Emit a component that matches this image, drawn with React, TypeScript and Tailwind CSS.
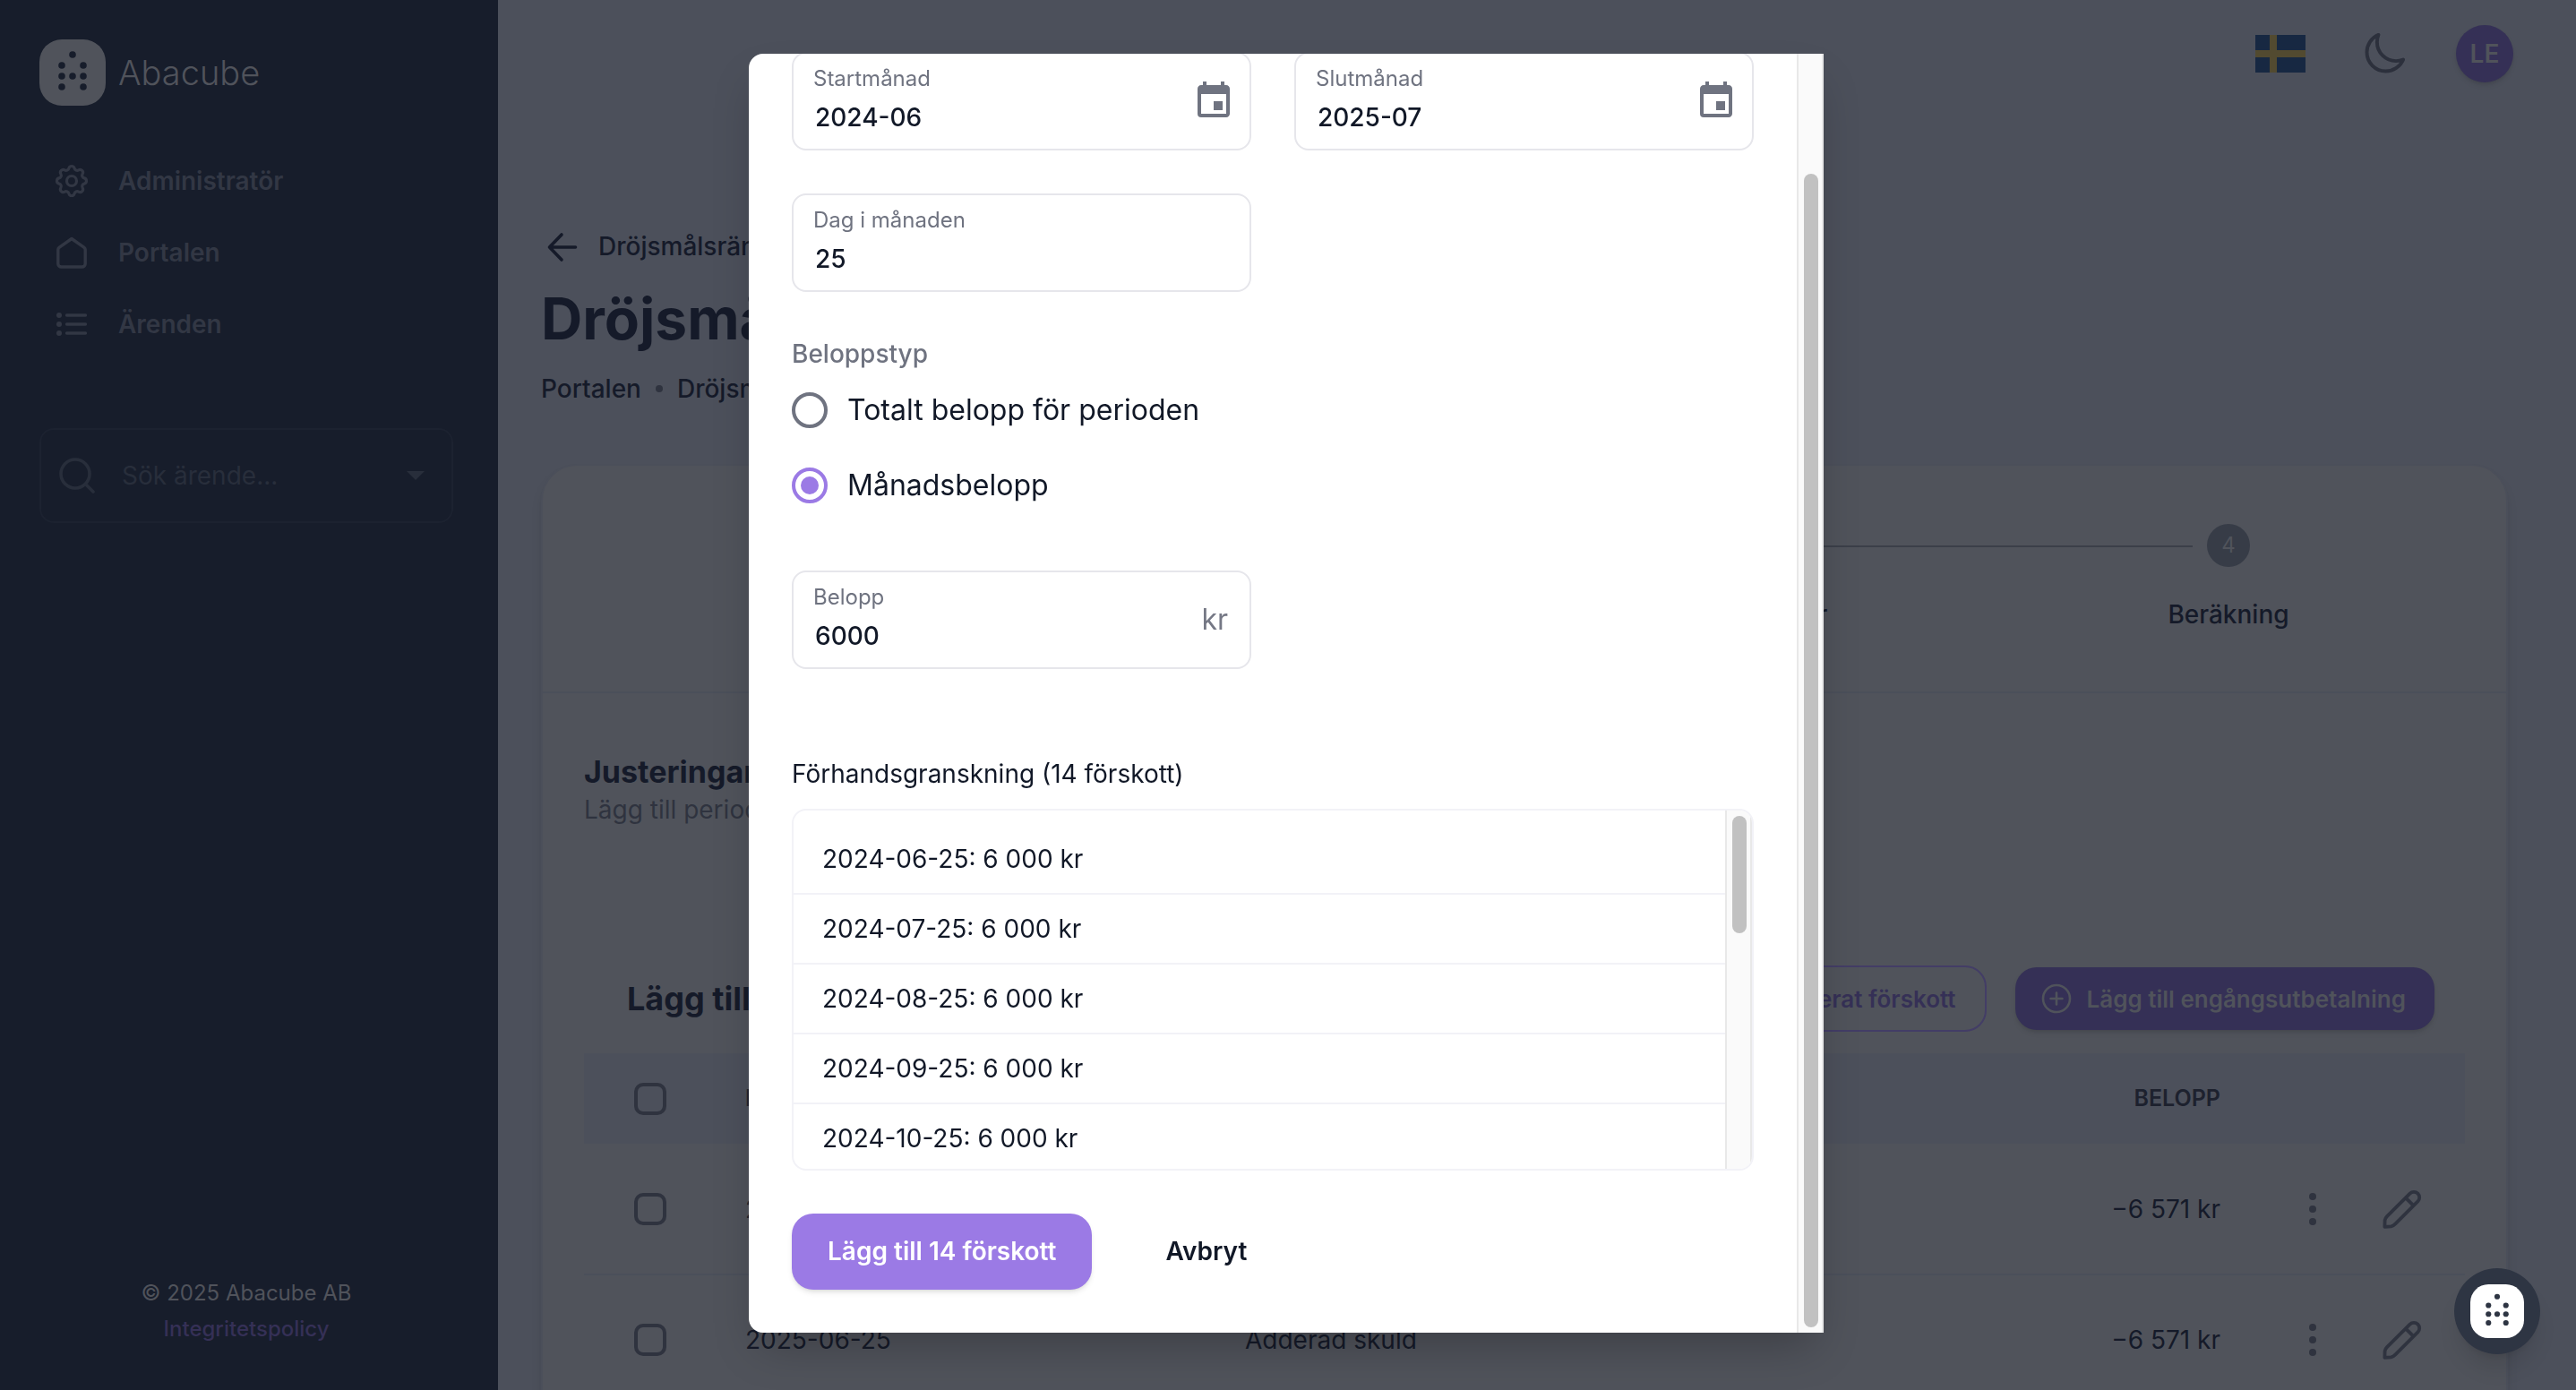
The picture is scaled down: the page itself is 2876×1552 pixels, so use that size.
import { useState } from 'react';
import { HiOutlineMoon } from 'react-icons/hi2';
import { MdEvent } from 'react-icons/md';
import { TbSettings } from 'react-icons/tb';

const steps = ['Uppgifter', 'Perioder', 'Justeringar', 'Beräkning'];

const rows = [
  { date: '2025-07-25', reason: 'Adderad skuld', amount: '−6 571 kr' },
  { date: '2025-06-25', reason: 'Adderad skuld', amount: '−6 571 kr' },
];

const preview = ['2024-06-25', '2024-07-25', '2024-08-25', '2024-09-25', '2024-10-25'];

const logoDots = [
  [37, 17], [25, 29], [49, 29], [25, 41], [37, 41], [49, 41], [25, 53], [49, 53],
];

function LogoMark({ className }: { className: string }) {
  return (
    <svg viewBox="0 0 74 74" className={className} aria-hidden="true">
      <rect width="74" height="74" rx="25" fill="currentColor" />
      {logoDots.map(([x, y]) => (
        <circle key={`${x}-${y}`} cx={x} cy={y} r="3.8" className="fill-[var(--dot)]" />
      ))}
    </svg>
  );
}

function HomeIcon() {
  return (
    <svg viewBox="0 0 36 36" className="size-9" fill="none" stroke="currentColor" strokeWidth="3.4" strokeLinejoin="round" aria-hidden="true">
      <path d="M18 2.5 32 12.3a3 3 0 0 1 1.2 2.4V30.5a3.5 3.5 0 0 1-3.5 3.5H6.3a3.5 3.5 0 0 1-3.5-3.5V14.7a3 3 0 0 1 1.2-2.4L18 2.5z" />
    </svg>
  );
}

function ListIcon() {
  return (
    <svg viewBox="0 0 36 36" className="size-9" stroke="currentColor" strokeLinecap="round" aria-hidden="true">
      {[8, 18, 28].map((y) => (
        <g key={y}>
          <circle cx="4" cy={y} r="3" fill="currentColor" stroke="none" />
          <path d={`M12.5 ${y}H33.5`} strokeWidth="3.4" />
        </g>
      ))}
    </svg>
  );
}

function SearchIcon() {
  return (
    <svg viewBox="0 0 40 40" className="size-10" fill="none" stroke="currentColor" strokeWidth="3.6" strokeLinecap="round" aria-hidden="true">
      <circle cx="18" cy="18" r="16" />
      <path d="m31 31 7 7" />
    </svg>
  );
}

function PencilIcon() {
  return (
    <svg viewBox="0 0 48 48" className="size-12" fill="none" stroke="currentColor" strokeWidth="3.8" strokeLinejoin="round" aria-hidden="true">
      <path d="M32.6 6.6A6.2 6.2 0 0 1 41.4 15.4L16.4 40.4Q14 42.9 11.5 43.4L4.4 43.8 4.6 36.5Q4.8 34.4 7 32.2z" />
      <path d="m27.8 11.4 8.8 8.8" />
    </svg>
  );
}

function NavLink({ icon, label }: { icon: React.ReactNode; label: string }) {
  return (
    <a href="#" className="flex h-20 items-center pl-4 text-[28px] font-semibold">
      <span className="flex w-10 justify-center">{icon}</span>
      <span className="ml-8">{label}</span>
    </a>
  );
}

function Field({ id, label, value, onChange, end }: {
  id: string; label: string; value: string; onChange: (v: string) => void; end?: React.ReactNode;
}) {
  return (
    <div className="flex h-[110px] items-center rounded-2xl border-2 border-[#e6e6eb] pr-4 pl-[22px]">
      <div className="flex min-w-0 flex-1 flex-col">
        <label htmlFor={id} className="text-[24px] leading-9 text-[#6f7380]">{label}</label>
        <input
          id={id}
          value={value}
          onChange={(e) => onChange(e.target.value)}
          className="w-full bg-transparent pl-0.5 text-[28px] leading-[50px] font-medium text-[#111827] outline-none"
        />
      </div>
      {end}
    </div>
  );
}

function Sidebar() {
  return (
    <aside className="flex w-[556px] shrink-0 flex-col bg-[#171d2b] px-11 pt-11 pb-12 text-[#323744]">
      <a href="#" className="flex items-center gap-3.5 text-[#50535b] [--dot:#171d2b]">
        <LogoMark className="size-[74px]" />
        <span className="text-[38px] leading-none font-light">Abacube</span>
      </a>
      <nav className="mt-11">
        <NavLink icon={<TbSettings size={44} strokeWidth={1.75} className="shrink-0" />} label="Administratör" />
        <NavLink icon={<HomeIcon />} label="Portalen" />
        <NavLink icon={<ListIcon />} label="Ärenden" />
      </nav>
      <div className="mt-[76px] mr-[6px] flex h-[106px] items-center rounded-2xl border-2 border-[#1c2230] pr-[30px] pl-5 text-[#282e3b]">
        <SearchIcon />
        <input
          aria-label="Sök ärende"
          placeholder="Sök ärende..."
          className="ml-[30px] min-w-0 flex-1 bg-transparent text-[28px] outline-none placeholder:text-[#282e3b]"
        />
        <svg viewBox="0 0 20 10" className="h-2.5 w-5" fill="currentColor" aria-hidden="true">
          <path d="M0 0h20L10 10z" />
        </svg>
      </div>
      <footer className="mt-auto mr-[6px] text-center text-[24px] leading-10">
        <p className="text-[#50535b]">© 2025 Abacube AB</p>
        <a href="#" className="font-medium text-[#353056]">Integritetspolicy</a>
      </footer>
    </aside>
  );
}

function TopBar() {
  return (
    <header className="flex h-[120px] items-center justify-end gap-12 pr-[70px]">
      <button type="button" aria-label="Svenska" className="flex w-[72px] justify-center">
        <svg viewBox="0 0 56 42" className="h-[42px] w-14" aria-hidden="true">
          <rect width="56" height="42" fill="#172842" />
          <path d="M16 0h8v42h-8zM0 17h56v8H0z" fill="#524a30" />
        </svg>
      </button>
      <button type="button" aria-label="Mörkt läge" className="flex w-16 justify-center text-[#2c303c]">
        <HiOutlineMoon size={52} strokeWidth={1.8} />
      </button>
      <button type="button" className="size-16 rounded-full bg-[#353056] text-[28px] font-semibold text-[#50535b] shadow-md">LE</button>
    </header>
  );
}

function AdjustmentTable() {
  return (
    <table className="mt-6 w-full table-fixed text-[28px] text-[#151a29]">
      <thead>
        <tr className="h-[101px] bg-[#4c505b] text-[25px] text-[#1d212e]">
          <th className="w-[148px] pl-14 text-left">
            <input type="checkbox" aria-label="Markera alla" className="block size-9 appearance-none rounded-[10px] border-4 border-[#2f333f]" />
          </th>
          <th className="w-[558px] px-8 text-left font-semibold">DATUM</th>
          <th className="px-8 text-left font-semibold">ORSAK</th>
          <th className="px-8 text-right font-semibold">BELOPP</th>
          <th className="w-[241px]" aria-label="Åtgärder" />
        </tr>
      </thead>
      <tbody>
        {rows.map((row) => (
          <tr key={row.date} className="h-[146px] border-b-2 border-[#4b4f5a]">
            <td className="pl-14">
              <input type="checkbox" aria-label={row.date} className="block size-9 appearance-none rounded-[10px] border-4 border-[#2f333f]" />
            </td>
            <td className="px-8">{row.date}</td>
            <td className="px-8">{row.reason}</td>
            <td className="px-8 text-right">{row.amount}</td>
            <td className="text-[#2f333f]">
              <div className="flex justify-end pr-5">
                <button type="button" aria-label="Fler val" className="flex w-[100px] justify-center">
                  <svg viewBox="0 0 48 48" className="size-12" fill="currentColor" aria-hidden="true">
                    <circle cx="24" cy="10" r="4" />
                    <circle cx="24" cy="24" r="4" />
                    <circle cx="24" cy="38" r="4" />
                  </svg>
                </button>
                <button type="button" aria-label="Redigera" className="flex w-[100px] justify-center">
                  <PencilIcon />
                </button>
              </div>
            </td>
          </tr>
        ))}
      </tbody>
    </table>
  );
}

function AdvanceDialog() {
  const [start, setStart] = useState('2024-06');
  const [end, setEnd] = useState('2025-07');
  const [day, setDay] = useState('25');
  const [amount, setAmount] = useState('6000');
  const [type, setType] = useState('monthly');

  const types = [
    { value: 'total', label: 'Totalt belopp för perioden' },
    { value: 'monthly', label: 'Månadsbelopp' },
  ];

  return (
    <div role="dialog" aria-label="Periodiserat förskott" className="flex h-[92vh] w-full max-w-[1200px] overflow-hidden rounded-l-2xl bg-white text-[#111827] shadow-2xl">
      <form className="flex min-w-0 flex-1 flex-col justify-end px-12 pb-12" onSubmit={(e) => e.preventDefault()}>
        <div className="grid shrink-0 grid-cols-2 gap-12">
          <Field id="start" label="Startmånad" value={start} onChange={setStart} end={<MdEvent size={48} className="text-[#6f7380]" />} />
          <Field id="end" label="Slutmånad" value={end} onChange={setEnd} end={<MdEvent size={48} className="text-[#6f7380]" />} />
          <Field id="day" label="Dag i månaden" value={day} onChange={setDay} />
        </div>

        <fieldset className="mt-12 shrink-0">
          <legend className="text-[28px] leading-[42px] font-medium text-[#6f7380]">Beloppstyp</legend>
          {types.map((t) => (
            <label key={t.value} className="flex h-[84px] items-center gap-[22px] text-[32px]">
              <input
                type="radio"
                name="type"
                value={t.value}
                checked={type === t.value}
                onChange={() => setType(t.value)}
                className="grid size-10 appearance-none place-items-center rounded-full border-4 border-[#6f7380] before:size-5 before:rounded-full checked:border-[#9b7ae5] checked:before:bg-[#9b7ae5]"
              />
              {t.label}
            </label>
          ))}
        </fieldset>

        <div className="mt-[53px] grid shrink-0 grid-cols-2 gap-12">
          <Field id="amount" label="Belopp" value={amount} onChange={setAmount} end={<span className="pr-2 text-[32px] text-[#757885]">kr</span>} />
        </div>

        <h3 className="mt-24 text-[28px] leading-[42px]">Förhandsgranskning (14 förskott)</h3>
        <div className="mt-[18px] flex h-[404px] shrink-0 overflow-hidden rounded-2xl border-2 border-[#f2f2f7]">
          <ul className="min-w-0 flex-1 pt-4">
            {preview.map((date) => (
              <li key={date} className="flex h-[78px] items-center border-b-2 border-[#f2f2f7] px-8 text-[28px]">{date}: 6 000 kr</li>
            ))}
          </ul>
          <div className="w-[30px] border-x-2 border-[#e8e8e8] bg-[#fafafa] pt-1.5 pr-1 pl-1.5">
            <div className="h-[131px] rounded-full bg-[#c1c1c1]" />
          </div>
        </div>

        <div className="mt-12 flex shrink-0 text-[28px] font-semibold">
          <button type="submit" className="h-[85px] rounded-3xl bg-[#9b7ae5] px-10 text-white shadow-md">Lägg till 14 förskott</button>
          <button type="button" className="ml-[42px] px-10">Avbryt</button>
        </div>
      </form>
      <div className="w-[30px] border-x-2 border-[#e8e8e8] bg-[#fafafa] pt-[134px] pr-1 pb-1.5 pl-1.5">
        <div className="h-full rounded-full bg-[#c1c1c1]" />
      </div>
    </div>
  );
}

export default function App() {
  return (
    <div className="flex h-screen overflow-hidden bg-[#4c505b] font-['Inter',sans-serif] text-[28px] text-[#151a29]">
      <Sidebar />
      <main className="min-w-0 flex-1">
        <TopBar />
        <div className="pr-[76px] pl-12">
          <a href="#" className="mt-[134px] flex items-center gap-4 pl-1 leading-[42px] font-medium">
            <svg viewBox="0 0 44 42" className="h-[42px] w-11" fill="none" stroke="currentColor" strokeWidth="3.6" strokeLinecap="round" strokeLinejoin="round" aria-hidden="true">
              <path d="M34.5 22H6M19 8 5.5 22 19 36" />
            </svg>
            Dröjsmålsräntor
          </a>
          <h1 className="mt-[18px] text-[64px] leading-[84px] font-bold">Dröjsmålsränta</h1>
          <nav className="mt-[15px] flex items-center leading-[42px] font-medium">
            <a href="#">Portalen</a>
            <span className="mx-4 size-2 rounded-full bg-[#2f333f]" />
            <a href="#">Dröjsmålsräntor</a>
          </nav>

          <section className="mt-[63px] rounded-[40px] border-2 border-[#4b4f5a] bg-[#50535b] pb-16 shadow-lg">
            <ol className="flex border-b-2 border-[#4b4f5a] px-12 py-[65px]">
              {steps.map((step, i) => (
                <li key={step} className="relative flex flex-1 flex-col items-center">
                  {i > 0 && <span className="absolute top-6 right-1/2 left-[-50%] mx-10 border-t-2 border-[#3b3f49]" />}
                  <span className="flex size-12 items-center justify-center rounded-full bg-[#373c47] text-[24px] text-[#50535b]">{i + 1}</span>
                  <span className="mt-8 leading-[42px] font-medium">{step}</span>
                </li>
              ))}
            </ol>

            <div className="px-[46px] pt-[66px]">
              <h2 className="text-[34px] leading-11 font-bold">Justeringar</h2>
              <p className="leading-10 text-[#2f333f]">Lägg till periodiserade förskott och engångsutbetalningar</p>

              <div className="mt-[154px] flex items-center gap-8 pr-[34px] pl-12">
                <h3 className="mr-auto text-[36px] font-bold">Lägg till justeringar</h3>
                <button type="button" className="h-[74px] rounded-3xl border-2 border-[#433d66] px-8 text-[26px] font-semibold text-[#353056]">
                  Lägg till periodiserat förskott
                </button>
                <button type="button" className="flex h-[70px] items-center gap-4 rounded-3xl bg-[#353056] pr-8 pl-7 text-[26px] font-semibold text-[#50535b] shadow-md">
                  <svg viewBox="0 0 36 36" className="size-9" fill="none" stroke="currentColor" strokeWidth="2.6" strokeLinecap="round" aria-hidden="true">
                    <circle cx="18" cy="18" r="15" />
                    <path d="M18 11.5v13M11.5 18h13" />
                  </svg>
                  Lägg till engångsutbetalning
                </button>
              </div>
              <AdjustmentTable />
            </div>
          </section>
        </div>
      </main>

      <div className="fixed inset-0 flex items-center justify-center pr-1 pb-1">
        <AdvanceDialog />
      </div>
      <button type="button" aria-label="Öppna chatt" className="fixed right-10 bottom-10 flex size-24 items-center justify-center rounded-full bg-[#2e3543] text-white shadow-xl [--dot:#2e3543]">
        <LogoMark className="size-[60px]" />
      </button>
    </div>
  );
}
